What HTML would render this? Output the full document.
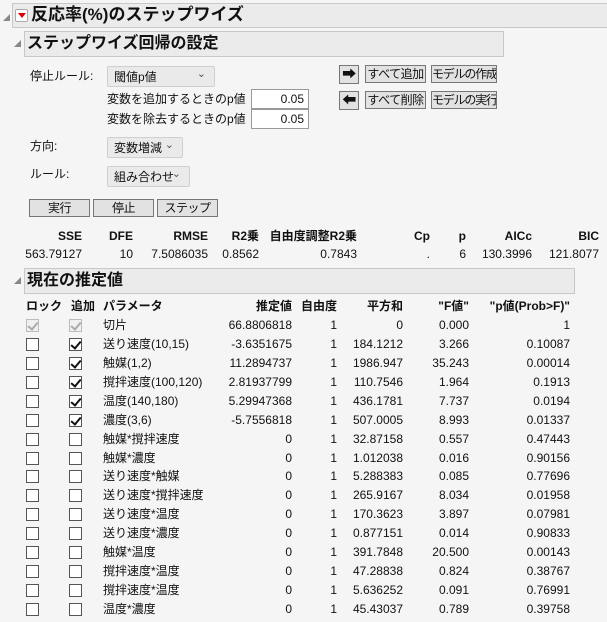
<!DOCTYPE html><html><head><meta charset="utf-8"><style>
body{margin:0;width:607px;height:622px;background:#f5f5f5;font-family:"Liberation Sans","Noto Sans CJK JP",sans-serif;font-size:12px;color:#111;position:relative;overflow:hidden}
.a{position:absolute;white-space:nowrap;line-height:16px;height:16px}
.r{text-align:right}
.hd{position:absolute;background:#ebebeb;border:1px solid #c8c8c8;font-weight:bold}
.tri{position:absolute;width:0;height:0;border-left:7px solid transparent;border-bottom:7px solid #888}
.btn{position:absolute;background:#e2e2e2;border:1px solid #777;text-align:center;line-height:16px;height:16px;font-size:12px;white-space:nowrap;overflow:hidden;letter-spacing:-0.5px}
.dd{position:absolute;background:#eaeaea;border:1px solid #cfcfcf;border-radius:2px;padding-left:6px;line-height:20px;white-space:nowrap;box-sizing:border-box}
.dd:after{content:"⌄";position:absolute;right:8px;top:-3px;font-size:11px;color:#555}
.inp{position:absolute;background:#fff;border:1px solid #999;text-align:right;padding-right:4px;line-height:18px;box-sizing:border-box}
.cb{position:absolute;width:13px;height:13px;border:1px solid #555;background:#fff;box-sizing:border-box}
.cb.ck:after{content:"";position:absolute;left:3px;top:0px;width:4px;height:8px;border:solid #111;border-width:0 2px 2px 0;transform:rotate(40deg)}
.cb.g{border-color:#bbb;background:#f0f0f0}
.cb.g:after{border-color:#aaa}
.b{font-weight:bold}
</style></head><body>
<div class="tri" style="left:3px;top:14px"></div>
<div class="hd" style="left:12px;top:3px;width:594px;height:23px"></div>
<div class="a" style="left:15px;top:9px;width:11px;height:11px;background:#fff;border:1px solid #aaa;border-radius:2px"></div>
<div class="a" style="left:18px;top:13px;width:0;height:0;border-left:4px solid transparent;border-right:4px solid transparent;border-top:5px solid #d00"></div>
<div class="a b" style="left:31px;top:5px;font-size:17px;line-height:20px;height:20px">反応率(%)のステップワイズ</div>
<div class="tri" style="left:14px;top:40px"></div>
<div class="hd" style="left:24px;top:31px;width:478px;height:24px"></div>
<div class="a b" style="left:27px;top:34px;font-size:16px;line-height:20px;height:20px">ステップワイズ回帰の設定</div>

<div class="a" style="left:30px;top:68px">停止ルール:</div>
<div class="dd" style="left:107px;top:66px;width:108px;height:21px">閾値p値</div>
<div class="a" style="left:107px;top:91px">変数を追加するときのp値</div>
<div class="inp" style="left:251px;top:89px;width:58px;height:20px">0.05</div>
<div class="a" style="left:107px;top:111px">変数を除去するときのp値</div>
<div class="inp" style="left:251px;top:109px;width:58px;height:20px">0.05</div>
<div class="a" style="left:30px;top:138px">方向:</div>
<div class="dd" style="left:107px;top:137px;width:76px;height:21px">変数増減</div>
<div class="a" style="left:30px;top:166px">ルール:</div>
<div class="dd" style="left:107px;top:166px;width:83px;height:21px">組み合わせ</div>
<div class="btn" style="left:29px;top:199px;width:59px">実行</div>
<div class="btn" style="left:93px;top:199px;width:59px">停止</div>
<div class="btn" style="left:157px;top:199px;width:59px">ステップ</div>

<div class="btn" style="left:339px;top:65px;width:18px;height:17px;font-size:14px;line-height:16px">➡</div>
<div class="btn" style="left:365px;top:65px;width:59px">すべて追加</div>
<div class="btn" style="left:431px;top:65px;width:64px;letter-spacing:-1.2px">モデルの作成</div>
<div class="btn" style="left:339px;top:91px;width:18px;height:17px;font-size:14px;line-height:16px">⬅</div>
<div class="btn" style="left:365px;top:91px;width:59px">すべて削除</div>
<div class="btn" style="left:431px;top:91px;width:64px;letter-spacing:-1.2px">モデルの実行</div>

<div class="a r b" style="right:525px;top:228px">SSE</div>
<div class="a r b" style="right:474px;top:228px">DFE</div>
<div class="a r b" style="right:399px;top:228px">RMSE</div>
<div class="a r b" style="right:348px;top:228px">R2乗</div>
<div class="a r b" style="right:250px;top:228px">自由度調整R2乗</div>
<div class="a r b" style="right:177px;top:228px">Cp</div>
<div class="a r b" style="right:141px;top:228px">p</div>
<div class="a r b" style="right:75px;top:228px">AICc</div>
<div class="a r b" style="right:8px;top:228px">BIC</div>
<div class="a r" style="right:525px;top:246px">563.79127</div>
<div class="a r" style="right:474px;top:246px">10</div>
<div class="a r" style="right:399px;top:246px">7.5086035</div>
<div class="a r" style="right:348px;top:246px">0.8562</div>
<div class="a r" style="right:250px;top:246px">0.7843</div>
<div class="a r" style="right:177px;top:246px">.</div>
<div class="a r" style="right:141px;top:246px">6</div>
<div class="a r" style="right:75px;top:246px">130.3996</div>
<div class="a r" style="right:8px;top:246px">121.8077</div>

<div class="tri" style="left:14px;top:277px"></div>
<div class="hd" style="left:24px;top:268px;width:549px;height:24px"></div>
<div class="a b" style="left:27px;top:271px;font-size:16px;line-height:20px;height:20px">現在の推定値</div>

<div class="a b" style="left:26px;top:298px">ロック</div>
<div class="a b" style="left:71px;top:298px">追加</div>
<div class="a b" style="left:103px;top:298px">パラメータ</div>
<div class="a r b" style="right:315px;top:298px">推定値</div>
<div class="a r b" style="right:270px;top:298px">自由度</div>
<div class="a r b" style="right:204px;top:298px">平方和</div>
<div class="a r b" style="right:138px;top:298px">"F値"</div>
<div class="a r b" style="right:37px;top:298px">"p値(Prob&gt;F)"</div>

<div id="rows"></div>
<script>
var d=[["切片","66.8806818","0","0.000","1",2],
["送り速度(10,15)","-3.6351675","184.1212","3.266","0.10087",1],
["触媒(1,2)","11.2894737","1986.947","35.243","0.00014",1],
["撹拌速度(100,120)","2.81937799","110.7546","1.964","0.1913",1],
["温度(140,180)","5.29947368","436.1781","7.737","0.0194",1],
["濃度(3,6)","-5.7556818","507.0005","8.993","0.01337",1],
["触媒*撹拌速度","0","32.87158","0.557","0.47443",0],
["触媒*濃度","0","1.012038","0.016","0.90156",0],
["送り速度*触媒","0","5.288383","0.085","0.77696",0],
["送り速度*撹拌速度","0","265.9167","8.034","0.01958",0],
["送り速度*温度","0","170.3623","3.897","0.07981",0],
["送り速度*濃度","0","0.877151","0.014","0.90833",0],
["触媒*温度","0","391.7848","20.500","0.00143",0],
["撹拌速度*温度","0","47.28838","0.824","0.38767",0],
["撹拌速度*温度","0","5.636252","0.091","0.76991",0],
["温度*濃度","0","45.43037","0.789","0.39758",0]];
var h="";
d.forEach(function(r,i){var t=Math.round(317+i*18.93);
var c1=r[5]==2?"cb ck g":"cb",c2=r[5]==2?"cb ck g":(r[5]==1?"cb ck":"cb");
h+='<div class="'+c1+'" style="left:26px;top:'+(t+2)+'px"></div><div class="'+c2+'" style="left:69px;top:'+(t+2)+'px"></div>';
h+='<div class="a" style="left:103px;top:'+t+'px">'+r[0]+'</div>';
h+='<div class="a r" style="right:315px;top:'+t+'px">'+r[1]+'</div>';
h+='<div class="a r" style="right:270px;top:'+t+'px">1</div>';
h+='<div class="a r" style="right:204px;top:'+t+'px">'+r[2]+'</div>';
h+='<div class="a r" style="right:138px;top:'+t+'px">'+r[3]+'</div>';
h+='<div class="a r" style="right:37px;top:'+t+'px">'+r[4]+'</div>';});
document.getElementById("rows").innerHTML=h;
</script>
</body></html>
